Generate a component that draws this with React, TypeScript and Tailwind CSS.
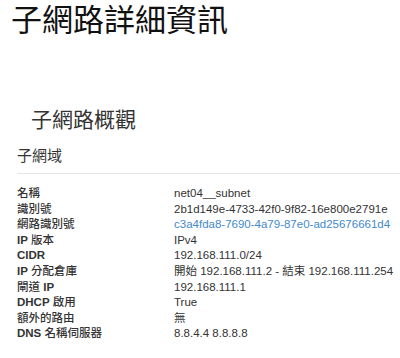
import React from 'react';

const font = "font-['Liberation_Sans','Noto_Sans_CJK_TC',sans-serif]";

const rows: { label: string; value: string; link?: boolean }[] = [
  { label: '名稱', value: 'net04__subnet' },
  { label: '識別號', value: '2b1d149e-4733-42f0-9f82-16e800e2791e' },
  { label: '網路識別號', value: 'c3a4fda8-7690-4a79-87e0-ad25676661d4', link: true },
  { label: 'IP 版本', value: 'IPv4' },
  { label: 'CIDR', value: '192.168.111.0/24' },
  { label: 'IP 分配倉庫', value: '開始 192.168.111.2 - 結束 192.168.111.254' },
  { label: '閘道 IP', value: '192.168.111.1' },
  { label: 'DHCP 啟用', value: 'True' },
  { label: '額外的路由', value: '無' },
  { label: 'DNS 名稱伺服器', value: '8.8.4.4 8.8.8.8' },
];

// latin words in the labels are bold, the CJK part stays regular
function Label({ text }: { text: string }) {
  return (
    <>
      {text.split(/([A-Za-z]+)/).filter(Boolean).map((part, i) =>
        /[A-Za-z]/.test(part)
          ? <span key={i} className="font-bold">{part}</span>
          : <span key={i} className="font-medium">{part}</span>
      )}
    </>
  );
}

export default function App() {
  return (
    <div className={`${font} w-[400px] h-[358px] bg-white overflow-hidden text-[#333]`}>
      <h1 className="pl-[11px] pt-[3px] text-[31px] leading-[36px] text-[#111]">子網路詳細資訊</h1>

      <h2 className="pl-[31px] mt-[69px] text-[21px] leading-[24px]">子網路概觀</h2>

      <div className="pl-[17px] mt-[14px]">
        <h3 className="text-[15px] leading-[20px] pb-[7px] border-b border-[#e5e5e5]">子網域</h3>

        <dl className="grid grid-cols-[157px_1fr] mt-[12px] text-[11.5px] leading-[15.6px] whitespace-nowrap">
          {rows.map(r => (
            <React.Fragment key={r.label}>
              <dt className="text-[#333]"><Label text={r.label} /></dt>
              <dd className={r.link ? 'text-[#428bca]' : 'text-[#333]'}>{r.value}</dd>
            </React.Fragment>
          ))}
        </dl>
      </div>
    </div>
  );
}
